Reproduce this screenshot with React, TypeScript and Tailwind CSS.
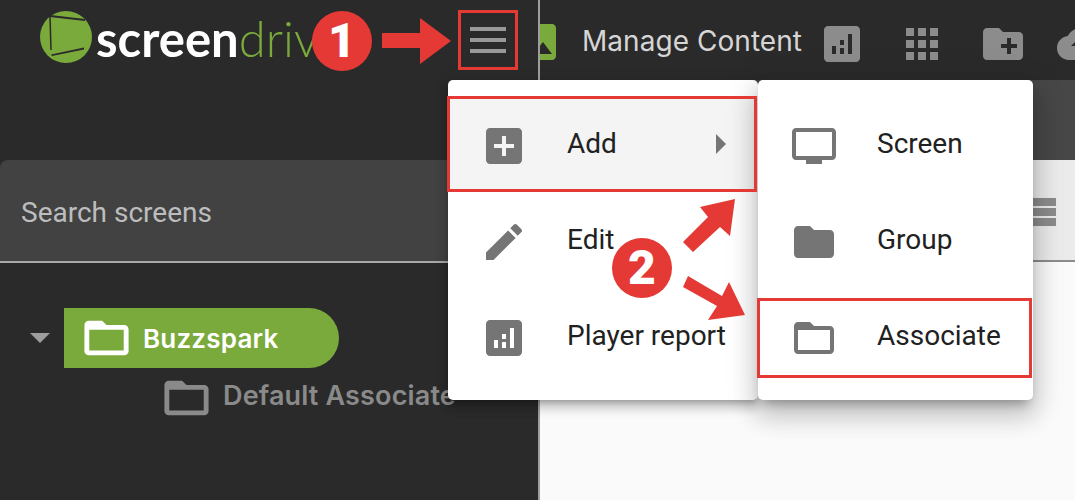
import type { ReactNode } from 'react'

const ICONS = {
  addBox: 'M19 3H5c-1.11 0-2 .9-2 2v14c0 1.1.89 2 2 2h14c1.1 0 2-.9 2-2V5c0-1.1-.9-2-2-2zm-2 10h-4v4h-2v-4H7v-2h4V7h2v4h4v2z',
  edit: 'M3 17.25V21h3.75L17.81 9.94l-3.75-3.75L3 17.25zM20.71 7.04c.39-.39.39-1.02 0-1.41l-2.34-2.34c-.39-.39-1.02-.39-1.41 0l-1.83 1.83 3.75 3.75 1.83-1.83z',
  report: 'M19 3H5c-1.1 0-2 .9-2 2v14c0 1.1.9 2 2 2h14c1.1 0 2-.9 2-2V5c0-1.1-.9-2-2-2zM9 17H7v-4h2v4zm4 0h-2v-3h2v3zm0-4.5h-2V10h2v2.5zm4 4.5h-2V7h2v10z',
  tv: 'M21 3H3c-1.1 0-2 .9-2 2v12c0 1.1.9 2 2 2h5v2h8v-2h5c1.1 0 1.99-.9 1.99-2L23 5c0-1.1-.9-2-2-2zm0 14H3V5h18v12z',
  folder: 'M10 4H4c-1.1 0-1.99.9-1.99 2L2 18c0 1.1.9 2 2 2h16c1.1 0 2-.9 2-2V8c0-1.1-.9-2-2-2h-8l-2-2z',
  folderOpen: 'M20 6h-8l-2-2H4c-1.1 0-1.99.9-1.99 2L2 18c0 1.1.9 2 2 2h16c1.1 0 2-.9 2-2V8c0-1.1-.9-2-2-2zm0 12H4V8h16v10z',
  apps: 'M4 8h4V4H4v4zm6 12h4v-4h-4v4zm-6 0h4v-4H4v4zm0-6h4v-4H4v4zm6 0h4v-4h-4v4zm6-10v4h4V4h-4zm-6 4h4V4h-4v4zm6 6h4v-4h-4v4zm0 6h4v-4h-4v4z',
  folderAdd: 'M20 6h-8l-2-2H4c-1.11 0-1.99.89-1.99 2L2 18c0 1.11.89 2 2 2h16c1.11 0 2-.89 2-2V8c0-1.11-.89-2-2-2zm-1 8h-3v3h-2v-3h-3v-2h3V9h2v3h3v2z',
  photo: 'M21 19V5c0-1.1-.9-2-2-2H5c-1.1 0-2 .9-2 2v14c0 1.1.9 2 2 2h14c1.1 0 2-.9 2-2zM8.5 13.5l2.5 3.01L14.5 12l4.5 6H5l3.5-4.5z',
  cloud: 'M19.35 10.04C18.67 6.59 15.64 4 12 4 9.11 4 6.6 5.64 5.35 8.04 2.34 8.36 0 10.91 0 14c0 3.31 2.69 6 6 6h13c2.76 0 5-2.24 5-5 0-2.64-2.05-4.78-4.65-4.96zM14 13v4h-4v-4H7l5-5 5 5h-3z',
}

function Icon({ d, className }: { d: string; className: string }) {
  return (
    <svg viewBox="0 0 24 24" className={`h-12 w-12 shrink-0 fill-current ${className}`}>
      <path d={d} fillRule="evenodd" />
    </svg>
  )
}

// sidebar folders are a bit bigger and heavier than the menu ones
function TreeFolder({ className }: { className: string }) {
  return (
    <svg viewBox="0 0 24 24" preserveAspectRatio="none" className={`h-[52px] w-[53px] shrink-0 fill-current ${className}`}>
      <path
        d="M20 6h-8l-2-2H4c-1.1 0-1.99.9-1.99 2L2 18c0 1.1.9 2 2 2h16c1.1 0 2-.9 2-2V8c0-1.1-.9-2-2-2zm-.2 11.8H4.2V8.2h15.6v9.6z"
        fillRule="evenodd"
      />
    </svg>
  )
}

function MenuItem({ icon, label, active, children }: { icon: string; label: string; active?: boolean; children?: ReactNode }) {
  return (
    <div className={`flex h-24 items-center pl-8 ${active ? 'bg-[#f4f4f4]' : ''}`}>
      <Icon d={icon} className="mt-1 text-[#757575]" />
      <span className="ml-[39px] text-[28px] text-[#212121]">{label}</span>
      {children}
    </div>
  )
}

function Badge({ n, className }: { n: string; className: string }) {
  return (
    <div className={`absolute flex h-[60px] w-[60px] items-center justify-center rounded-full bg-[#e53935] text-[48px] font-black leading-none text-white ${className}`}>
      {n}
    </div>
  )
}

function Sidebar() {
  return (
    <aside className="flex h-full w-[538px] shrink-0 flex-col bg-[#2a2a2a]">
      <div className="flex h-20 shrink-0 items-center pl-[40px]">
        <svg viewBox="0 0 52 52" className="-mt-[6px] h-[52px] w-[52px] shrink-0">
          <circle cx="26" cy="26" r="26" fill="#7aaa3c" />
          <path d="M10 5 L45 9" stroke="#2a2a2a" strokeWidth="2" />
          <path d="M10 5 L11 39" stroke="#2a2a2a" strokeWidth="1.5" />
          <path d="M11 43.5 L44 36.5 L44 38.5 L12 45 Z" fill="#2a2a2a" />
        </svg>
        <span className="ml-[4px] -mt-[3px] font-['Lato',sans-serif] text-[49px] leading-none text-white">
          <span className="font-bold">screen</span>
          <span className="font-light text-[#7aaa3c]">driv</span>
        </span>
      </div>
      <div className="h-20 shrink-0" />
      <div className="flex h-[103px] shrink-0 items-center rounded-tl-lg border-b-2 border-[#a8a8a8] bg-[#424242] pl-[21px] pt-1">
        <span className="text-[28px] text-[#bdbdbd]">Search screens</span>
      </div>
      <div className="pt-[45px]">
        <div className="flex items-center">
          <div className="ml-[30px] h-0 w-0 border-x-[10px] border-t-[10px] border-x-transparent border-t-[#9e9e9e]" />
          <div className="ml-[14px] flex h-[60px] w-[275px] items-center rounded-r-[30px] bg-[#7aaa3c] pl-4">
            <TreeFolder className="text-white" />
            <span className="ml-[10px] font-['Inter',sans-serif] text-[26px] font-semibold tracking-[0.2px] text-white">Buzzspark</span>
          </div>
        </div>
        <div className="mt-1 flex items-center pl-40">
          <TreeFolder className="text-[#8a8a8a]" />
          <span className="-mt-[3px] ml-[10px] whitespace-nowrap font-['Inter',sans-serif] text-[27px] font-semibold tracking-[0.15px] text-[#8a8a8a]">Default Associate</span>
        </div>
      </div>
    </aside>
  )
}

function ContentPane() {
  return (
    <main className="flex h-full min-w-0 flex-1 flex-col overflow-hidden border-l-2 border-[#9e9e9e] bg-[#fafafa]">
      <div className="flex h-20 shrink-0 items-center bg-[#2a2a2a]">
        <Icon d={ICONS.photo} className="-ml-[26px] mt-[3px] text-[#7aaa3c]" />
        <span className="ml-5 mt-[2px] whitespace-nowrap font-['Inter',sans-serif] text-[28px] font-normal tracking-[0.05px] text-[#d6d6d6]">Manage Content</span>
        <Icon d={ICONS.report} className="ml-4 mt-2 text-[#8c8c8c]" />
        <Icon d={ICONS.apps} className="ml-8 mt-2 text-[#8c8c8c]" />
        <Icon d={ICONS.folderAdd} className="ml-[33px] mt-2 text-[#8c8c8c]" />
        <Icon d={ICONS.cloud} className="ml-[30px] mt-2 text-[#8c8c8c]" />
      </div>
      <div className="h-20 shrink-0 bg-[#474747]" />
      <div className="flex h-[102px] shrink-0 items-center justify-end border-b-2 border-[#8c8c8c] bg-[#ebebeb] pr-[19px]">
        <div className="mt-1 flex w-10 flex-col gap-[2px]">
          <div className="h-2 bg-[#8c8c8c]" />
          <div className="h-2 bg-[#8c8c8c]" />
          <div className="h-2 bg-[#8c8c8c]" />
        </div>
      </div>
    </main>
  )
}

export default function App() {
  return (
    <div className="relative flex h-[500px] w-[1075px] overflow-hidden font-['Roboto',sans-serif]">
      <Sidebar />
      <ContentPane />

      {/* hamburger */}
      <div className="absolute left-[458px] top-[10px] flex h-[60px] w-[60px] flex-col items-center justify-center gap-[7px] border-[3px] border-[#e53935]">
        <div className="h-1 w-9 bg-[#999999]" />
        <div className="h-1 w-9 bg-[#999999]" />
        <div className="h-1 w-9 bg-[#999999]" />
      </div>

      {/* menus */}
      <div className="absolute left-[448px] top-20 h-80 w-[310px] rounded-[5px] bg-white py-4 shadow-[0_5px_5px_-3px_rgba(0,0,0,0.2),0_8px_10px_1px_rgba(0,0,0,0.14),0_3px_14px_2px_rgba(0,0,0,0.12)]">
        <MenuItem icon={ICONS.addBox} label="Add" active>
          <div className="absolute left-[268px] h-0 w-0 border-y-[10px] border-l-[10px] border-y-transparent border-l-[#757575]" />
        </MenuItem>
        <MenuItem icon={ICONS.edit} label="Edit" />
        <MenuItem icon={ICONS.report} label="Player report" />
      </div>
      <div className="absolute left-[758px] top-20 h-80 w-[275px] rounded-[5px] bg-white py-4 shadow-[0_8px_10px_-5px_rgba(0,0,0,0.3),0_16px_24px_2px_rgba(0,0,0,0.14),0_6px_30px_5px_rgba(0,0,0,0.12)]">
        <MenuItem icon={ICONS.tv} label="Screen" />
        <MenuItem icon={ICONS.folder} label="Group" />
        <MenuItem icon={ICONS.folderOpen} label="Associate" />
      </div>

      {/* annotations */}
      <div className="absolute left-[447px] top-[96px] h-[96px] w-[310px] border-[3px] border-[#e53935]" />
      <div className="absolute left-[757px] top-[298px] h-20 w-[275px] border-[3px] border-[#e53935]" />
      <svg className="pointer-events-none absolute left-0 top-0 h-[500px] w-[1075px]" viewBox="0 0 1075 500">
        <polygon points="382,33 420,33 420,18 451,41 420,64 420,48 382,48" fill="#e53935" />
        <polygon points="735,199 730,236 720,227 693,252 683,242 708,217 700,207" fill="#e53935" />
        <polygon points="688,276 722,296 729,282 745,315 708,320 717,306 683,287" fill="#e53935" />
      </svg>
      <Badge n="1" className="left-[312px] top-[11px]" />
      <Badge n="2" className="left-[612px] top-[238px]" />
    </div>
  )
}
